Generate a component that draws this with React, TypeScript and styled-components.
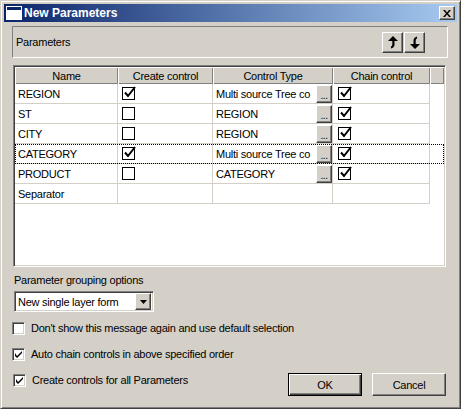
import React from 'react';
import styled, { createGlobalStyle } from 'styled-components';

const Global = createGlobalStyle`
  html, body { margin: 0; padding: 0; background: #d4d0c8; }
  body { font-family: "Liberation Sans", Arial, sans-serif; font-size: 11px; letter-spacing: -0.25px; color: #000; }
  * { box-sizing: border-box; }
`;

const Window = styled.div`
  width: 461px;
  height: 409px;
  background: #d4d0c8;
  border: 1px solid;
  border-color: #d4d0c8 #404040 #404040 #d4d0c8;
  box-shadow: inset 1px 1px #fff, inset -1px -1px #808080;
  padding: 3px;
  display: flex;
  flex-direction: column;
`;

const TitleBar = styled.div`
  height: 18px;
  display: flex;
  align-items: center;
  padding: 0 2px 0 2px;
  gap: 2px;
  background: linear-gradient(to right, #0a246a, #a6caf0);
  color: #fff;
  font-weight: bold;
  font-size: 12px;
  letter-spacing: 0;
`;

const TitleText = styled.span`
  flex: 1;
  white-space: nowrap;
`;

const CloseButton = styled.div`
  width: 16px;
  height: 14px;
  background: #d4d0c8;
  border: 1px solid;
  border-color: #fff #404040 #404040 #fff;
  box-shadow: inset -1px -1px #808080;
  display: flex;
  align-items: center;
  justify-content: center;
`;

const Body = styled.div`
  flex: 1;
  display: flex;
  flex-direction: column;
  padding: 4px 9px 0 8px;
`;

const HeaderPanel = styled.div`
  height: 32px;
  border: 1px solid;
  border-color: #808080 #fff #fff #808080;
  display: flex;
  align-items: center;
  justify-content: space-between;
  padding: 0 22px 0 3px;
`;

const ArrowGroup = styled.div`
  display: flex;
  gap: 1px;
`;

const RaisedButton = styled.div`
  background: #d4d0c8;
  border: 1px solid;
  border-color: #fff #404040 #404040 #fff;
  box-shadow: inset -1px -1px #808080;
  display: flex;
  align-items: center;
  justify-content: center;
`;

const ArrowButton = styled(RaisedButton)`
  width: 21px;
  height: 21px;
`;

const TableFrame = styled.div`
  margin: 7px 2px 0 1px;
  height: 202px;
  background: #fff;
  border: 1px solid;
  border-color: #808080 #fff #fff #808080;
  box-shadow: inset 1px 1px #404040, inset -1px -1px #d4d0c8;
  padding: 1px;
  display: flex;
  flex-direction: column;
`;

const cols = '103px 95px 120px 97px 1fr';

const HeadRow = styled.div`
  display: grid;
  grid-template-columns: ${cols};
  height: 17px;
`;

const HeadCell = styled.div`
  background: #d4d0c8;
  box-shadow: inset 1px 1px #fff, inset -1px -1px #808080;
  display: flex;
  align-items: center;
  justify-content: center;
  white-space: nowrap;
`;

const Row = styled.div<{ $focused?: boolean }>`
  display: grid;
  grid-template-columns: ${cols};
  height: 20px;
  outline: ${(p) => (p.$focused ? '1px dotted #000' : 'none')};
  outline-offset: -1px;
`;

const Cell = styled.div<{ $pad?: number }>`
  border-right: 1px solid #d4d0c8;
  border-bottom: 1px solid #d4d0c8;
  display: flex;
  align-items: center;
  padding-left: ${(p) => p.$pad ?? 3}px;
  overflow: hidden;
  white-space: nowrap;
`;

const EmptyCell = styled.div``;

const TypeText = styled.span`
  flex: 1;
  white-space: nowrap;
`;

const DotsButton = styled(RaisedButton)`
  width: 16px;
  align-self: stretch;
  margin: 1px 0 0 0;
  align-items: flex-end;
  font-size: 10px;
  line-height: 12px;
  letter-spacing: -0.5px;
`;

const GridBox = styled.div`
  width: 13px;
  height: 13px;
  border: 1px solid #000;
  background: #fff;
  position: relative;
`;

const CheckOverlay = styled.svg`
  position: absolute;
  left: 1px;
  top: -2px;
  overflow: visible;
`;

const Label = styled.div`
  margin: 7px 0 0 2px;
  height: 13px;
  line-height: 13px;
`;

const Select = styled.div`
  margin: 4px 0 0 2px;
  width: 140px;
  height: 21px;
  background: #fff;
  border: 1px solid;
  border-color: #808080 #fff #fff #808080;
  box-shadow: inset 1px 1px #404040, inset -1px -1px #d4d0c8;
  padding: 2px;
  display: flex;
  align-items: center;
`;

const SelectText = styled.span`
  flex: 1;
  padding-left: 1px;
`;

const DropButton = styled(RaisedButton)`
  width: 16px;
  height: 17px;
`;

const CheckList = styled.div`
  margin-top: 3px;
  display: flex;
  flex-direction: column;
`;

const CheckRow = styled.label<{ $indent?: number }>`
  height: 26px;
  display: flex;
  align-items: center;
  gap: 6px;
  padding-left: ${(p) => p.$indent ?? 0}px;
`;

const SunkenBox = styled.span`
  width: 13px;
  height: 13px;
  background: #fff;
  border: 1px solid;
  border-color: #808080 #fff #fff #808080;
  box-shadow: inset 1px 1px #404040, inset -1px -1px #d4d0c8;
  display: flex;
  align-items: center;
  justify-content: center;
`;

const BottomRow = styled.div`
  display: flex;
  justify-content: space-between;
  align-items: flex-start;
  padding-right: 2px;
`;

const ButtonGroup = styled.div`
  display: flex;
  gap: 10px;
  margin-top: 6px;
`;

const DialogButton = styled.div<{ $default?: boolean }>`
  width: 74px;
  height: 23px;
  background: #d4d0c8;
  border: 1px solid;
  border-color: ${(p) => (p.$default ? '#000' : '#fff #404040 #404040 #fff')};
  box-shadow: ${(p) =>
    p.$default
      ? 'inset 1px 1px #fff, inset -1px -1px #404040, inset -2px -2px #808080'
      : 'inset -1px -1px #808080'};
  display: flex;
  align-items: center;
  justify-content: center;
`;

const WindowIcon = () => (
  <svg width="16" height="14" viewBox="0 0 16 14">
    <rect x="0.5" y="0.5" width="15" height="13" fill="#fff" stroke="#fff" />
    <rect x="1" y="1" width="14" height="3" fill="#0a246a" />
  </svg>
);

const CloseIcon = () => (
  <svg width="8" height="7" viewBox="0 0 8 7">
    <path d="M0 0h2l2 2.5L6 0h2L5 3.5 8 7H6L4 4.5 2 7H0l3-3.5z" fill="#000" />
  </svg>
);

const UpIcon = () => (
  <svg width="10" height="13" viewBox="0 0 10 13">
    <path d="M5 0L10 5H6.5V8.5Q6.5 11.5 3 12.5V10.5Q4.3 10 4.3 8.5V5H0Z" fill="#000" />
  </svg>
);

const DownIcon = () => (
  <svg width="10" height="13" viewBox="0 0 10 13">
    <path d="M5 13L0 8H3.5V4.5Q3.5 1.5 7 0.5V2.5Q5.7 3 5.7 4.5V8H10Z" fill="#000" />
  </svg>
);

const GridCheck = ({ checked }: { checked?: boolean }) => (
  <GridBox>
    {checked && (
      <CheckOverlay width="12" height="12" viewBox="0 0 12 12">
        <path d="M1 6.5L4 10L11 1" fill="none" stroke="#000" strokeWidth="2" />
      </CheckOverlay>
    )}
  </GridBox>
);

const ClassicCheck = ({ checked }: { checked?: boolean }) => (
  <SunkenBox>
    {checked && (
      <svg width="7" height="7" viewBox="0 0 7 7">
        <path d="M0 2v3l2 2 5-5V-0L2 5z" fill="#000" />
      </svg>
    )}
  </SunkenBox>
);

const rows = [
  { name: 'REGION', create: true, type: 'Multi source Tree co', chain: true },
  { name: 'ST', create: false, type: 'REGION', chain: true },
  { name: 'CITY', create: false, type: 'REGION', chain: true },
  { name: 'CATEGORY', create: true, type: 'Multi source Tree co', chain: true, focused: true },
  { name: 'PRODUCT', create: false, type: 'CATEGORY', chain: true },
];

export default function App() {
  return (
    <>
      <Global />
      <Window>
        <TitleBar>
          <WindowIcon />
          <TitleText>New Parameters</TitleText>
          <CloseButton>
            <CloseIcon />
          </CloseButton>
        </TitleBar>
        <Body>
          <HeaderPanel>
            <span>Parameters</span>
            <ArrowGroup>
              <ArrowButton>
                <UpIcon />
              </ArrowButton>
              <ArrowButton>
                <DownIcon />
              </ArrowButton>
            </ArrowGroup>
          </HeaderPanel>
          <TableFrame>
            <HeadRow>
              <HeadCell>Name</HeadCell>
              <HeadCell>Create control</HeadCell>
              <HeadCell>Control Type</HeadCell>
              <HeadCell>Chain control</HeadCell>
              <HeadCell />
            </HeadRow>
            {rows.map((r) => (
              <Row key={r.name} $focused={r.focused}>
                <Cell>{r.name}</Cell>
                <Cell $pad={4}>
                  <GridCheck checked={r.create} />
                </Cell>
                <Cell>
                  <TypeText>{r.type}</TypeText>
                  <DotsButton>...</DotsButton>
                </Cell>
                <Cell $pad={5}>
                  <GridCheck checked={r.chain} />
                </Cell>
                <EmptyCell />
              </Row>
            ))}
            <Row>
              <Cell>Separator</Cell>
              <Cell />
              <Cell />
              <Cell />
              <EmptyCell />
            </Row>
          </TableFrame>
          <Label>Parameter grouping options</Label>
          <Select>
            <SelectText>New single layer form</SelectText>
            <DropButton>
              <svg width="7" height="4" viewBox="0 0 7 4">
                <path d="M0 0h7L3.5 4z" fill="#000" />
              </svg>
            </DropButton>
          </Select>
          <CheckList>
            <CheckRow>
              <ClassicCheck />
              <span>Don't show this message again and use default selection</span>
            </CheckRow>
            <CheckRow>
              <ClassicCheck checked />
              <span>Auto chain controls in above specified order</span>
            </CheckRow>
            <BottomRow>
              <CheckRow $indent={1}>
                <ClassicCheck checked />
                <span>Create controls for all Parameters</span>
              </CheckRow>
              <ButtonGroup>
                <DialogButton $default>OK</DialogButton>
                <DialogButton>Cancel</DialogButton>
              </ButtonGroup>
            </BottomRow>
          </CheckList>
        </Body>
      </Window>
    </>
  );
}
